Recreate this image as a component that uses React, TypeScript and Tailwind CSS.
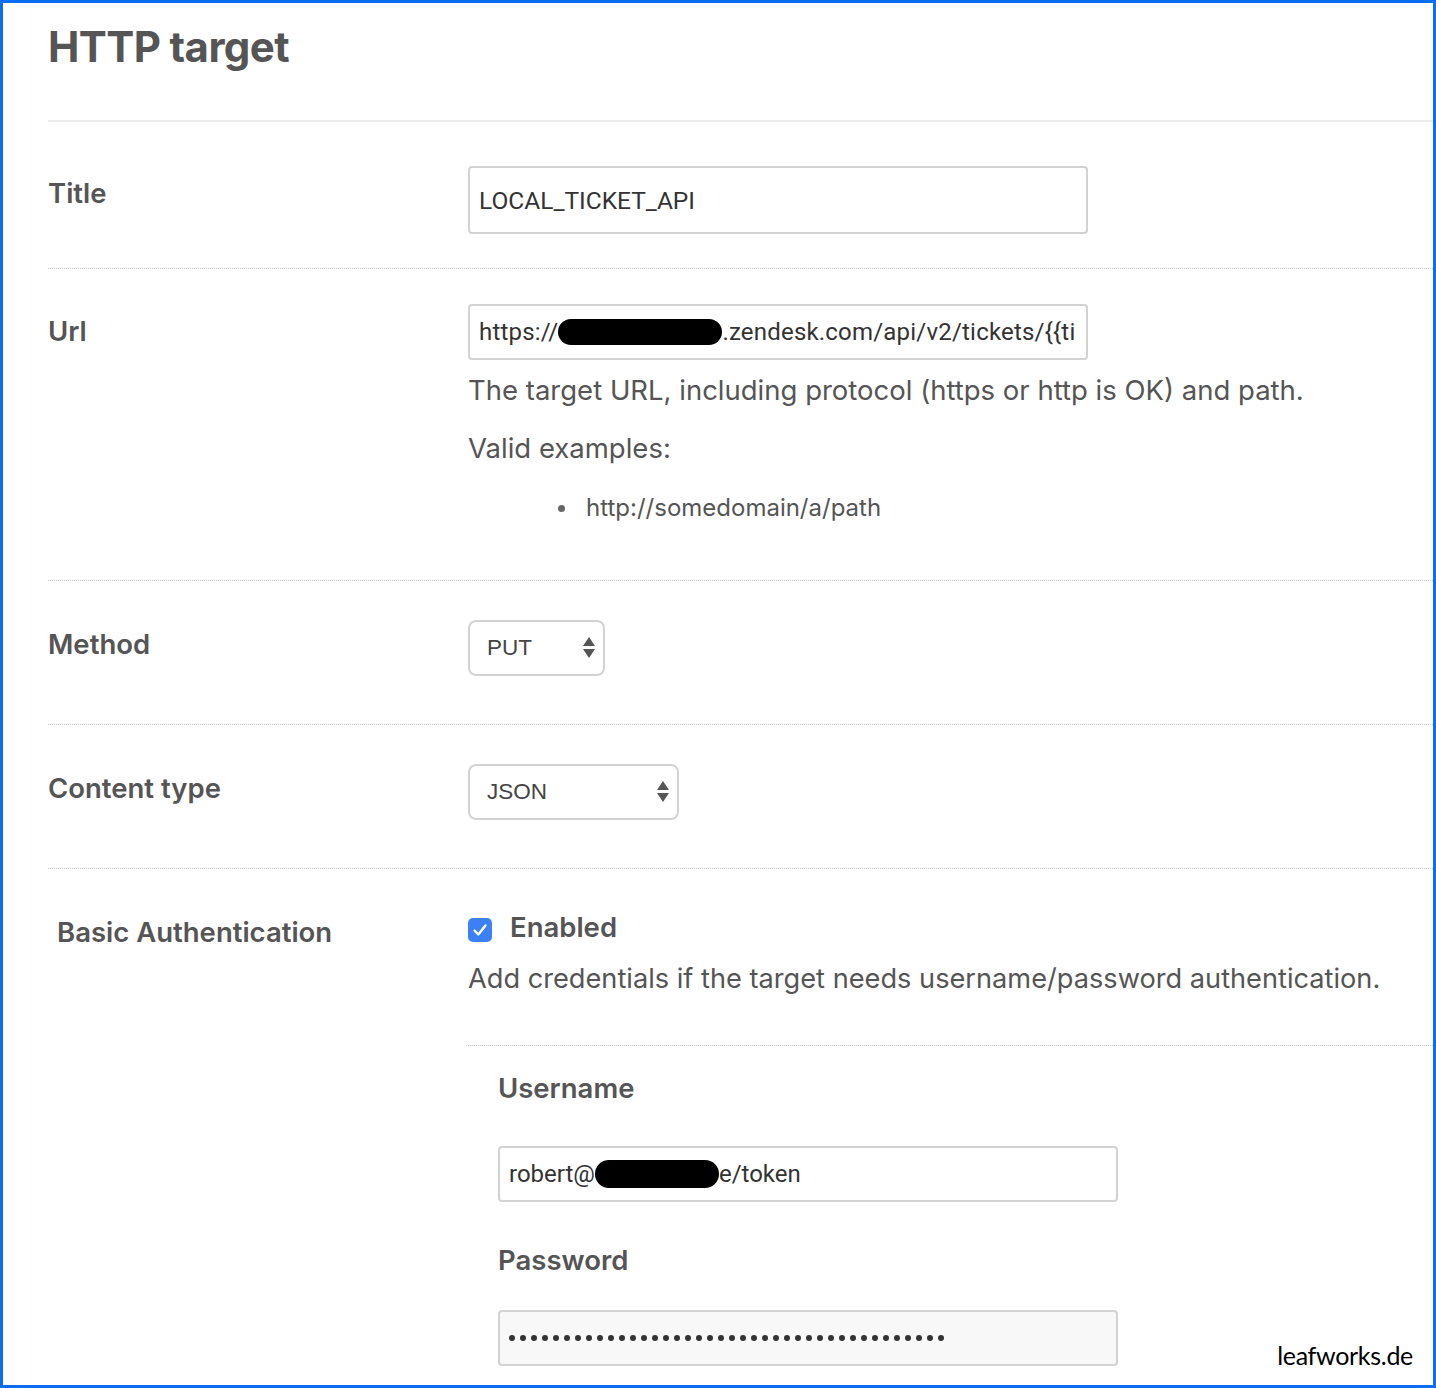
import React from 'react';

function Blob({ className }: { className: string }) {
  return <span className={`inline-block shrink-0 rounded-full bg-black ${className}`} />;
}

function SelectArrows() {
  return (
    <svg width="12" height="22" viewBox="0 0 12 22" className="shrink-0">
      <polygon points="6,0 12,9 0,9" fill="#555" />
      <polygon points="0,12 12,12 6,21" fill="#555" />
    </svg>
  );
}

function FakeSelect({ value, width }: { value: string; width: string }) {
  return (
    <div
      className={`${width} flex h-[56px] items-center justify-between rounded-[8px] border-2 border-[#d2d2d2] bg-white pl-[17px] pr-[8px] font-['Liberation_Sans',sans-serif] text-[22.5px] text-[#444]`}
    >
      <span>{value}</span>
      <SelectArrows />
    </div>
  );
}

const label = 'text-[27.5px] font-semibold leading-[32px]';
const field =
  "flex h-[56px] w-[620px] items-center overflow-hidden whitespace-nowrap rounded-[4px] border-2 border-[#d2d2d2] px-[9px] font-['Roboto',sans-serif] text-[24px] text-[#333]";

export default function App(): JSX.Element {
  const dots = Array.from({ length: 40 }, (_, i) => i);

  return (
    <div className="relative h-[1388px] w-[1436px] overflow-hidden border-[3px] border-[#0b6ef0] bg-white font-['Inter',sans-serif] text-[#555]">
      <div className="pl-[45px]">
        <h1 className="pt-[18px] text-[42px] font-bold leading-[52px] tracking-[-0.6px]">HTTP target</h1>
        <div className="mt-[47px] h-[2px] bg-[#ebebeb]" />

        {/* Title */}
        <div className="flex border-b border-dotted border-[#c4c4c4] pt-[44px] pb-[34px]">
          <div className={`w-[420px] pt-[11px] ${label}`}>Title</div>
          <input
            readOnly
            value="LOCAL_TICKET_API"
            className="h-[68px] w-[620px] rounded-[4px] border-2 border-[#d2d2d2] px-[9px] font-['Roboto',sans-serif] text-[24.5px] text-[#333] outline-none"
          />
        </div>

        {/* Url */}
        <div className="flex border-b border-dotted border-[#c4c4c4] pt-[35px] pb-[58px]">
          <div className={`w-[420px] pt-[11px] ${label}`}>Url</div>
          <div className="flex-1">
            <div className={`${field} tracking-[0.2px]`}>
              <span>https://</span>
              <Blob className="h-[26px] w-[164px]" />
              <span>.zendesk.com/api/v2/tickets/{'{{'}ti</span>
            </div>
            <p className="mt-[14px] text-[27.5px] leading-[32px]">
              The target URL, including protocol (https or http is OK) and path.
            </p>
            <p className="mt-[26px] text-[27.5px] leading-[32px]">Valid examples:</p>
            <div className="mt-[30px] flex items-center gap-[21px] pl-[90px] text-[24px] leading-[28px]">
              <span className="h-[7px] w-[7px] rounded-full bg-[#666]" />
              <span>http://somedomain/a/path</span>
            </div>
          </div>
        </div>

        {/* Method */}
        <div className="flex border-b border-dotted border-[#c4c4c4] pt-[39px] pb-[48px]">
          <div className={`w-[420px] pt-[8px] ${label}`}>Method</div>
          <FakeSelect value="PUT" width="w-[137px]" />
        </div>

        {/* Content type */}
        <div className="flex border-b border-dotted border-[#c4c4c4] pt-[39px] pb-[48px]">
          <div className={`w-[420px] pt-[8px] ${label}`}>Content type</div>
          <FakeSelect value="JSON" width="w-[211px]" />
        </div>

        {/* Basic Authentication */}
        <div className="flex pt-[42px]">
          <div className={`w-[420px] pt-[5px] pl-[9px] ${label}`}>Basic Authentication</div>
          <div className="flex-1">
            <div className="flex items-center gap-[18px]">
              <span className="mt-[5px] flex h-[24px] w-[24px] items-center justify-center rounded-[5px] bg-[#3b80f5]">
                <svg width="20" height="20" viewBox="0 0 20 20">
                  <path d="M4.5 10.5 L8.3 14.5 L15.5 5.5" fill="none" stroke="white" strokeWidth="2.4" strokeLinecap="round" strokeLinejoin="round" />
                </svg>
              </span>
              <span className={label}>Enabled</span>
            </div>
            <p className="mt-[20px] text-[27.2px] leading-[32px]">
              Add credentials if the target needs username/password authentication.
            </p>
            <div className="mt-[50px] border-t border-dotted border-[#c4c4c4] pl-[30px]">
              <div className={`mt-[26px] ${label}`}>Username</div>
              <div className={`mt-[42px] ${field}`}>
                <span>robert@</span>
                <Blob className="h-[28px] w-[124px]" />
                <span>e/token</span>
              </div>
              <div className={`mt-[42px] ${label}`}>Password</div>
              <div className="mt-[34px] flex h-[56px] w-[620px] items-center gap-[5px] rounded-[4px] border-2 border-[#d2d2d2] bg-[#f8f8f8] px-[9px]">
                {dots.map((d) => (
                  <span key={d} className="h-[6px] w-[6px] rounded-full bg-[#333]" />
                ))}
              </div>
            </div>
          </div>
        </div>
      </div>

      <div className="absolute bottom-[15px] right-[20px] font-['Lato',sans-serif] text-[25px] leading-[30px] tracking-[-0.3px] text-black">
        leafworks.de
      </div>
    </div>
  );
}
